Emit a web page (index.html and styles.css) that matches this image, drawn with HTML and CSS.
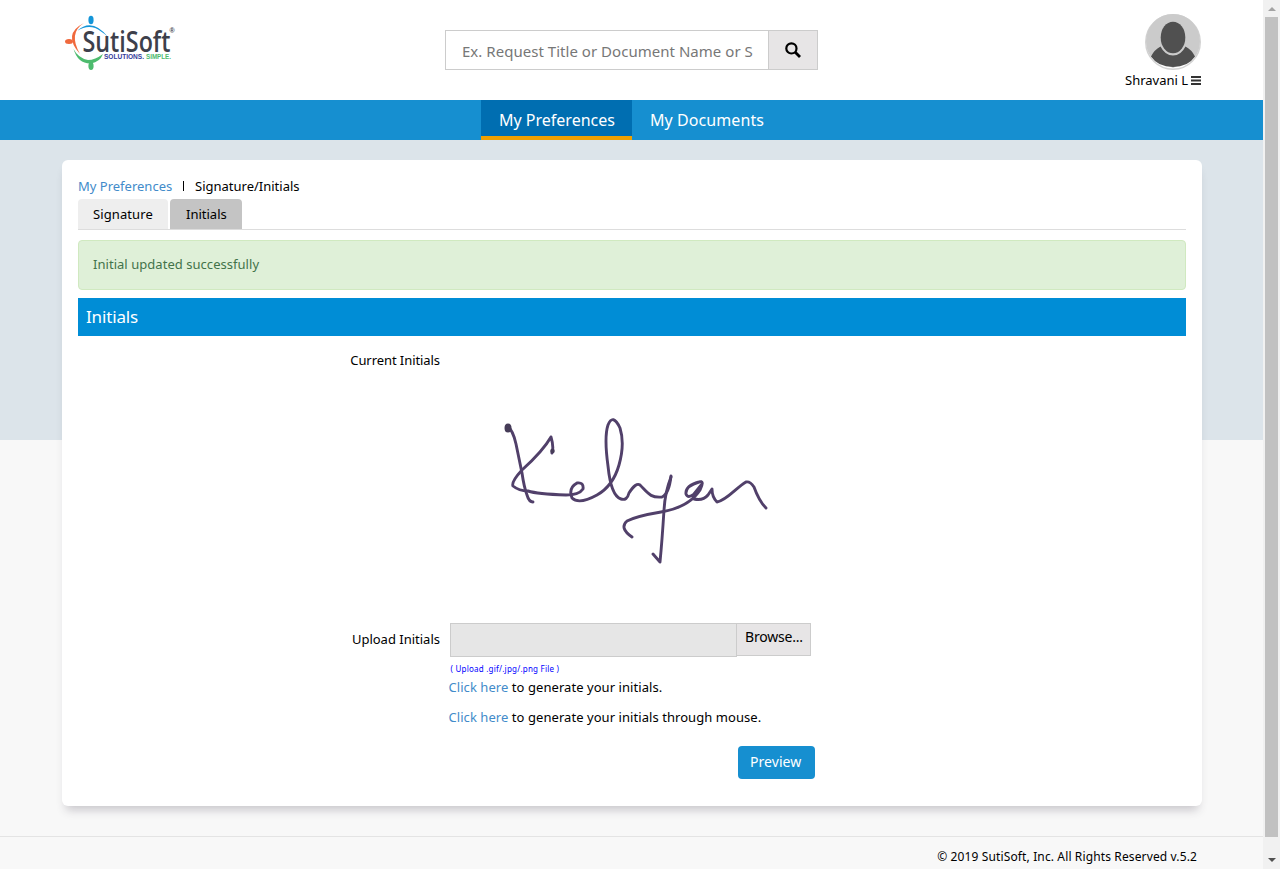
FILE: index.html
```html
<!DOCTYPE html>
<html lang="en">
<head>
<meta charset="utf-8">
<title>SutiSoft - Initials</title>
<link rel="stylesheet" href="styles.css">
</head>
<body>
<div class="page">
  <header class="header">
    <svg class="logo" viewBox="0 0 120 64">
      <path d="M17 21Q32 7 48 27Q45 24 41 21.500Q30 13 17 21Z" fill="#1495d8"/>
      <path d="M24 13Q2 24 20 44Q8 23 24 13Z" fill="#f0693d"/>
      <path d="M13.500 39Q18 54 31 53.500Q40 52 43 44Q35 50 28 50Q18 48 13.500 39Z" fill="#4dbb6e"/>
      <ellipse cx="31" cy="10" rx="2.6" ry="4.2" fill="#1495d8"/>
      <ellipse cx="9" cy="31.500" rx="4" ry="2.5" fill="#f0693d"/>
      <ellipse cx="31" cy="56" rx="2.6" ry="4" fill="#4dbb6e"/>
      <text class="logo-name" x="22.500" y="41.500" textLength="88" lengthAdjust="spacingAndGlyphs">SutiSoft</text>
      <text class="logo-reg" x="109.5" y="23">®</text>
      <text class="logo-tag" x="44" y="48.500" fill="#343c9b" textLength="40" lengthAdjust="spacingAndGlyphs">SOLUTIONS.</text>
      <text class="logo-tag" x="86" y="48.500" fill="#4dbb6e" textLength="25" lengthAdjust="spacingAndGlyphs">SIMPLE.</text>
    </svg>
    <div class="search">
      <div class="search-field">Ex. Request Title or Document Name or S</div>
      <div class="search-button">
        <svg width="16" height="16" viewBox="0 0 16 16" fill="none" stroke="#000"><circle cx="6.4" cy="6.4" r="5.1" stroke-width="2.2"/><path d="M10 10l5 5" stroke-width="2.8"/></svg>
      </div>
    </div>
    <div class="user">
      <svg class="avatar" width="56" height="56" viewBox="0 0 56 56">
        <circle cx="28" cy="28" r="27.3" fill="#fff" stroke="#d3d3d3" stroke-width="1.4"/>
        <path d="M1 27a27 27 0 0 1 54 0q0 9-5 16L28 54 6 43Q1 36 1 27Z" fill="#cbcbcb"/>
        <path d="M6 42.500Q9 36 15.500 32.500Q20 41.500 28 41.500T40.500 32.500Q47 36 50 42.500Q43 53 28 53T6 42.500Z" fill="#505050"/>
        <ellipse cx="28" cy="23.5" rx="12.3" ry="15.8" fill="#505050"/>
      </svg>
      <div class="user-name"><span>Shravani L</span><svg width="10" height="9" viewBox="0 0 10 9" stroke="#333" stroke-width="1.8"><path d="M0 1h10M0 4.5h10M0 8h10"/></svg></div>
    </div>
  </header>
  <nav class="nav"><a class="nav-item active">My Preferences</a><a class="nav-item documents">My Documents</a></nav>
  <main class="main">
    <section class="card">
      <div class="crumbs"><a class="link crumb-link">My Preferences</a><i class="divider"></i><span class="crumb-current">Signature/Initials</span></div>
      <div class="tabs"><a class="tab tab-signature">Signature</a><a class="tab tab-initials">Initials</a></div>
      <div class="alert">Initial updated successfully</div>
      <h1 class="title">Initials</h1>
      <div class="row current">
        <div class="label current-label">Current Initials</div>
        <svg class="signature" width="320" height="180" viewBox="480 400 320 180">
          <g class="ink" fill="none" stroke-linecap="round" stroke-linejoin="round">
            <path d="M507 426Q513 430 516 444L522 473Q524 487 527 495Q529 502 533 502"/>
            <path d="M552 453Q554 447 551 437Q543 451 522 470Q511 482 513 486Q519 491 528 491Q537 494 566 495Q579 495 583 489Q584 482 577 483Q568 488 572 498Q579 505 597 495Q613 486 619 465Q625 444 620 428Q613 413 608 425Q604 437 608 466Q611 496 621 499Q627 501 629 493Q636 482 640 485C648 493 650 498 662 497Q669 494 671 476"/>
            <path d="M671 477Q665 492 664 510Q662 542 660 562L653 554"/>
            <path d="M632 537Q619 528 627 521Q637 516 661 512C679 509 693 501 700 490Q705 480 699 482Q685 486 686 494Q688 499 694 494L702 484"/>
            <path d="M694 499Q703 501 708 495L712 489Q712 497 717 502C726 501 737 487 746 482Q750 481 754 487Q759 501 766 508"/>
          </g>
          <ellipse class="blot" cx="508" cy="428" rx="3.5" ry="4.5"/><circle class="blot" cx="552.5" cy="451" r="2.3"/>
        </svg>
      </div>
      <div class="row upload">
        <div class="label upload-label">Upload Initials</div>
        <div class="file-path"></div><div class="browse">Browse...</div>
      </div>
      <div class="details">
        <div class="hint">( Upload .gif/.jpg/.png File )</div>
        <div class="help help-first"><a class="link">Click here</a> to generate your initials.</div>
        <div class="help help-mouse"><a class="link">Click here</a> to generate your initials through mouse.</div>
        <div class="preview">Preview</div>
      </div>
    </section>
  </main>
  <footer class="footer"><span>© 2019 SutiSoft, Inc. All Rights Reserved v.5.2</span></footer>
</div>
<div class="scrollbar"><i class="arrow up"></i><i class="thumb"></i><i class="arrow down"></i></div>
</body>
</html>
```
FILE: styles.css
```css
* { box-sizing: border-box; }
body { margin: 0; width: 1280px; height: 869px; overflow: hidden; display: flex; font: 13px/20px "Noto Sans", sans-serif; color: #000; background: #f8f8f8; }
.page { width: 1263px; height: 869px; white-space: nowrap; }
.header { height: 100px; background: #fff; display: flex; padding-left: 60px; }
.logo { width: 120px; height: 64px; margin-top: 10px; }
.logo-name { font: 600 29px "Open Sans", sans-serif; fill: #3d404b; }
.logo-reg { font: bold 7px "Liberation Sans", sans-serif; fill: #3d404b; }
.logo-tag { font: bold 6.5px "Liberation Sans", sans-serif; }
.search { display: flex; margin: 30px 0 0 265px; width: 373px; height: 40px; border: 1px solid #ccc; }
.search-field { width: 322px; padding: 10px 0 0 16px; font-size: 15px; line-height: 20px; letter-spacing: .03px; color: #777; }
.search-button { flex: 1; border-left: 1px solid #ccc; background: #e7e5e6; display: flex; align-items: center; justify-content: center; }
.user { margin: 14px 0 0 307px; width: 80px; }
.avatar { display: block; margin-left: 20px; }
.user-name { display: flex; align-items: center; gap: 3px; height: 20px; }
.nav { height: 40px; background: #168fd0; display: flex; padding-left: 481px; color: #fff; font-size: 16px; line-height: 40px; }
.nav-item { height: 40px; padding-left: 18px; }
.active { width: 151px; background: #006eb1; border-bottom: 4px solid #f0a000; }
.documents { letter-spacing: .08px; }
.main { height: 696px; padding: 20px 61px 0 62px; background: linear-gradient(#dce4ea 300px, #f8f8f8 300px); }
.card { height: 646px; padding: 16px 16px 0; border-radius: 6px; background: #fff; box-shadow: 0 8px 10px -4px rgba(60,50,70,.25); }
.crumbs { display: flex; align-items: center; height: 20px; }
.crumb-link { width: 105px; }
.divider { width: 1px; height: 10px; background: #000; margin-right: 11px; }
.link { color: #428bca; }
.tabs { display: flex; gap: 2px; margin-top: 3px; height: 31px; border-bottom: 1px solid #ddd; }
.tab { height: 30px; line-height: 30px; padding-left: 15px; border-radius: 4px 4px 0 0; }
.tab-signature { width: 90px; background: #eee; letter-spacing: .1px; }
.tab-initials { width: 72px; padding-left: 16px; background: #c4c4c4; }
.alert { margin-top: 10px; height: 50px; padding: 13px 14px; border: 1px solid #d0e9c0; border-radius: 4px; color: #43734a; background: #dff0d8; letter-spacing: .04px; }
.title { margin: 8px 0 0; height: 38px; padding-left: 8px; font-size: 17px; font-weight: 400; line-height: 38px; letter-spacing: -.15px; color: #fff; background: #008dd6; }
.row { display: flex; }
.current { height: 287px; padding-top: 14px; }
.label { width: 362px; text-align: right; }
.current-label { letter-spacing: -.07px; }
.signature { margin: 50px 0 0 40px; filter: blur(.5px); }
.ink { stroke: #51406a; stroke-width: 2.9px; }
.blot { fill: #463c58; }
.upload-label { padding-top: 6px; }
.file-path { margin-left: 10px; width: 287px; height: 34px; background: #e6e6e6; border: 1px solid #ccc; }
.browse { width: 74px; height: 33px; padding-left: 8px; border: 1px solid #ccc; border-left: 0; font-size: 14px; line-height: 26px; letter-spacing: -.2px; background: #e7e5e6; }
.details { padding-left: 370.500px; }
.hint { padding: 2px 0 0 2px; font-size: 8px; letter-spacing: .23px; color: #00f; }
.help { height: 20px; margin-top: -2px; letter-spacing: .06px; }
.help-mouse { margin-top: 10px; }
.preview { width: 77px; height: 33px; margin: 19px 0 0 289.500px; padding-left: 12px; border-radius: 4px; color: #fff; background: #168fd0; font-size: 14px; line-height: 32px; letter-spacing: .06px; }
.footer { height: 33px; border-top: 1px solid #e4e4e4; padding: 10px 66px 0 0; text-align: right; font-size: 12px; letter-spacing: .13px; }
.scrollbar { width: 17px; height: 869px; background: #f1f1f1; display: flex; flex-direction: column; align-items: center; }
.thumb { width: 13px; height: 820px; background: #c1c1c1; }
.arrow { width: 0; height: 0; border: 4px solid transparent; }
.up { border-top: 0; border-bottom-color: #a3a3a3; margin: 7px 0 6px; }
.down { border-bottom: 0; border-top-color: #505050; margin-top: 21px; }
```
